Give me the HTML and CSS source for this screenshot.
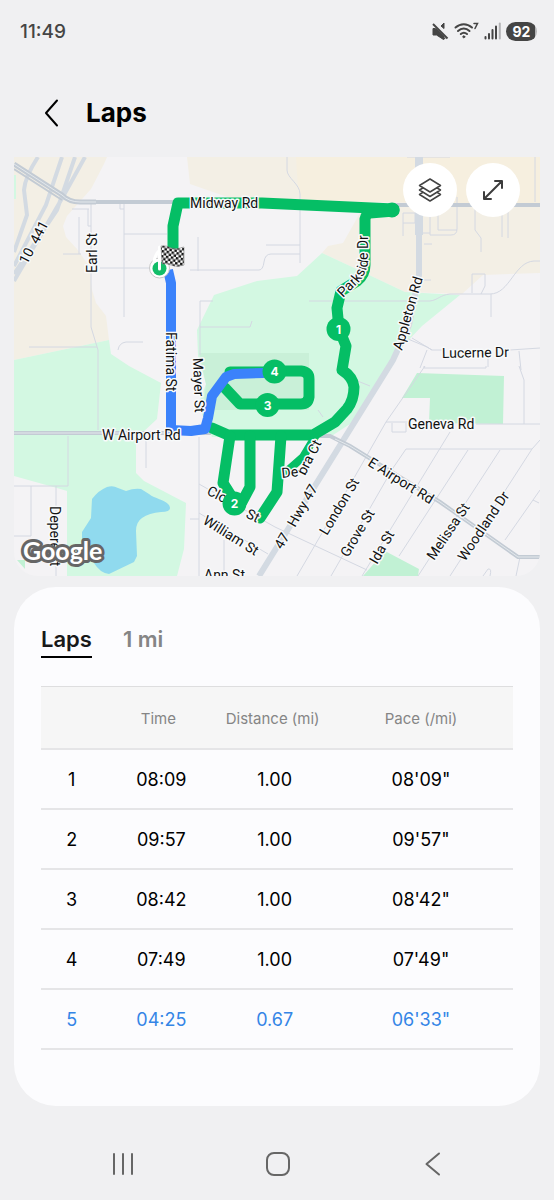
FILE: index.html
```html
<!DOCTYPE html>
<html lang="en">
<head>
<meta charset="utf-8">
<meta name="viewport" content="width=device-width, initial-scale=1">
<title>Laps</title>
<link rel="stylesheet" href="styles.css">
</head>
<body>
<div class="screen">
  <div class="status">
    <span class="clock">11:49</span>
    <div class="status-icons">
      <svg viewBox="0 0 17 18" width="17" height="18"><path d="M1 6.500h3.500l2 1 7.500 8-2.500 2-7-4.500H1zM9 4l3-3v5.500z" fill="#454545" stroke="#454545" stroke-linejoin="round"/><path d="M1.500 1.500L16 16" stroke="#f0f0f2" stroke-width="4"/><path d="M1 2L15.500 16.500" stroke="#454545" stroke-width="2"/><path d="M1 6.500h3.500L12 14v3.500L5.500 13H1z" fill="#454545"/></svg>
      <svg viewBox="0 0 25 18" width="25" height="18" fill="none" stroke="#454545" stroke-width="2" stroke-linecap="round"><path d="M1.500 5.500C6.500 1 13 1 18 5.500M4 9c3.500-3.200 8-3.200 11.500 0M6.800 12c2-1.700 4.200-1.700 6.200 0"/><circle cx="9.800" cy="14.800" r="1" fill="#454545" stroke-width="1"/><path d="M20 1.500h3.500L21 6.500" stroke-width="1.500"/></svg>
      <svg viewBox="0 0 17 18" width="17" height="18" stroke="#454545" stroke-width="2" stroke-linecap="round"><path d="M1.500 15V16.500M5 12V16.500M8.500 8V16.500M12 4.500V16.500"/><path d="M15.800 1.500V16.500" stroke="#b4b4b6"/></svg>
      <span class="battery">92</span>
    </div>
  </div>

  <header class="header">
    <button class="back" aria-label="Back"><svg viewBox="0 0 16 28" width="16" height="28" fill="none" stroke="#000" stroke-width="2" stroke-linecap="round" stroke-linejoin="round"><path d="M13 1.500L2 14 13 26.500"/></svg></button>
    <h1>Laps</h1>
  </header>

  <main>
    <section class="map" aria-label="Route map">
      <svg class="map-canvas" viewBox="14 157 526 419">
        <rect x="14" y="157" width="526" height="419" fill="#f4f3f5"/>
        <path fill="#f3efe5" d="M14 157H107L104 164 91 189 67 216 63 226 66 237 77 249 89 266 92 290 96 303 106 316 109 340 14 360z"/>
        <path fill="#f3efe5" d="M187 157H300V201L233 199 190 184z"/>
        <path fill="#f6efdf" d="M296 157H540V205L302 201 298 189z"/>
        <path fill="#f3efe5" d="M365 204H540V273L483 275 462 294 405 292 350 266 322 253 328 246 343 243z"/>
        <path fill="#d3f8e2" d="M14 360L109 340 111 354 129 366 161 383 157 419 142 433 136 443V473L144 481 186 503 184 549 177 576H67V491L57 488 14 476zM14 175h2v24h-2z"/>
        <path fill="#d3f8e2" d="M214 295L257 281 297 276 322 253 350 266 405 292 460 295 422 326 403 346 350 424 330 437H212L198 405 206 384 198 356 197 330z"/>
        <path fill="#c9f0d8" d="M199 353H309V410H203L206 384z"/>
        <path fill="#c1f1d4" d="M417 373L504 376 503 424 429 423 430 398H402zM385 551L419 569 418 576H363zM17 560h8v9z"/>
        <path fill="#90daee" d="M92 499Q99 490 107 487Q113 485 118 488L126 491Q134 488 141 489L149 494C155 499 164 499 169 505Q173 512 161 512Q149 513 142 518Q136 522 136 531L137 556 134 562 109 574Q100 573 94 563L82 539V532L91 518z"/>

        <g class="minor">
          <path d="M91 202V327L98 350 98 430M72 209H89M88 209V226H91M79 217V254M63 254H81M124 202V317M120 203V209H124M124 234H167M100 268H155M29 347H97M118 350Q119 343 126 342H143M198 237V271M190 270H259Q263 270 264 262Q265 254 271 254H300M266 245H300M300 263V194C300 184 287 178 287 170V157M200 355V301H213M200 327H250L252 321M309 301H430C438 300 440 295 450 294H490C510 294 514 262 534 261H540"/>
          <path d="M68 436V486H14M31 486V536H14M56 486V576M146 440V468M199 437V576M190 519H199M224 540V576M199 484L275 527 367 570M199 513L268 554"/>
          <path d="M403 213V236M403 213H415V223H403M430 235V200M430 235H451Q457 235 457 229V197M422 233H430M424 244H432M438 197V230H457M475 197V230L481 238V252M502 197V237M508 197V238M472 293V274H485V286L481 294M491 294V317M407 157H450M535 157V202M424 280H431"/>
          <path d="M408 339L427 347 432 350H442M412 338L432 350M427 350L420 368M488 349V367M510 350L540 348M519 351L521 370M424 366V368H486V366M519 366L524 380 524 424M386 422L425 366M386 422H408M476 424H540M392 423V432H406V423M297 576L350 485 386 422M331 576L393 468 406 449H532L540 440M362 576L450 432M399 556L468 450M418 576L500 450M450 576L532 449M505 540L540 490M533 500L539 503M520 557L516 576M483 576L488 569Q492 568 490 576M355 380L370 386M318 410L323 417"/>
        </g>
        <g class="roads">
          <path class="freeway" d="M14 252L27 215 24 190Q25 177 38 157M14 266L46 205 62 157M14 274L57 210 75 157M14 281L64 195 85 157" stroke-width="4"/>
          <path d="M14 164L62 195Q69 202 80 202H96" stroke-width="5"/><path d="M14 169L62 200" stroke-width="2"/>
          <path d="M90 202H176M14 433H170M390 205H540" stroke-width="4"/>
          <path class="highway" d="M419 157V275L409 325 393 360 259 576" stroke-width="6"/><path class="highway" d="M419 157V235" stroke-width="8"/>
          <path d="M313 436H330L350 446 440 502 518 557H540" stroke-width="4"/><path d="M199 434H211" stroke-width="2"/>
        </g>
        <path d="M14 164L62 195Q69 202 80 202H96M14 433H170M335 439L350 446 440 502 518 557H540" fill="none" stroke="#e3e8ec" stroke-width="1"/>

        <g class="route">
          <path d="M173 252V226L178 203H262L394 209"/>
          <path d="M394 211L370 213Q366 214 365 219V265Q365 275 357 281L341 291 337 308 339 329 346 346 342 370Q353 377 354 387Q354 400 347 409L335 422 313 435H228L212 428"/>
          <path d="M230 436L223 483 235 502M250 436V487L242 502M281 436L277 492 260 518"/>
          <path d="M315 437L303 457 286 472" stroke-width="8"/>
          <path d="M275 371H301Q309 372 309 379V397Q308 404 301 404H240L225 388M230 372H275"/>
          <circle cx="392" cy="210" r="2"/>
        </g>
        <path class="current" d="M264 373L234 374 226 377 212 396 208 418 205 429 191 431 171 430V283L168 270"/>

        <g class="pins">
          <circle cx="338.500" cy="329" r="12"/><circle cx="267.500" cy="405" r="12"/><circle cx="274.500" cy="371.500" r="12"/>
        </g>
        <g class="pin-text"><text x="338.500" y="334">1</text><text x="267.500" y="410">3</text><text x="274.500" y="376">4</text></g>

        <circle cx="159.500" cy="268" r="10" fill="#fff" stroke="#c8c8c8" stroke-width="1"/>
        <path d="M154 262Q155 254 160 250" fill="none" stroke="#fff" stroke-width="3"/>
        <circle cx="159.500" cy="268.500" r="7" fill="#12bd68"/>
        <path d="M159.500 247V269" stroke="#fff" stroke-width="3" stroke-linecap="round"/>
        <defs><pattern id="checks" width="5" height="5" patternUnits="userSpaceOnUse" patternTransform="rotate(8)"><path fill="#fff" d="M0 0h5v5H0z"/><path fill="#111" d="M0 0h2.500v2.500H0zM2.500 2.500H5V5H2.500z"/></pattern>
          <path id="parkside" d="M343 298L353 288Q366 277 368 262V228"/>
        </defs>
        <path d="M161 246Q166 245 171 248Q177 250 184 247V265Q177 268 171 265Q165 263 162 264z" fill="url(#checks)" stroke="#777" stroke-width=".5"/>

        <g class="labels">
          <text x="190" y="208">Midway Rd</text>
          <text transform="translate(97 273) rotate(-90)">Earl St</text>
          <text transform="translate(27 265) rotate(-62)">10&#160; 441</text>
          <text transform="translate(166 332) rotate(90)">Fatima St</text>
          <text transform="translate(193 358) rotate(88)">Mayer St</text>
          <text x="102" y="440">W Airport Rd</text>
          <text><textPath href="#parkside">Parkside Dr</textPath></text>
          <text transform="translate(402 351) rotate(-74)">Appleton Rd</text>
          <text transform="translate(442 358) rotate(-1)">Lucerne Dr</text>
          <text x="408" y="429">Geneva Rd</text>
          <text transform="translate(367 465) rotate(32)">E Airport Rd</text>
          <text transform="translate(305 476) rotate(-63)">bra Ct</text>
          <text transform="translate(282 478) rotate(-6)">De</text>
          <text transform="translate(206 494) rotate(27)">Clo</text>
          <text transform="translate(245 517) rotate(27)">St</text>
          <text transform="translate(202 523) rotate(32)">William St</text>
          <text transform="translate(282 550) rotate(-60)">47</text>
          <text transform="translate(295 528) rotate(-60)">Hwy 47</text>
          <text transform="translate(327 536) rotate(-59)">London St</text>
          <text transform="translate(348 558) rotate(-59)">Grove St</text>
          <text transform="translate(377 565) rotate(-60)">Ida St</text>
          <text transform="translate(434 561) rotate(-56)">Melissa St</text>
          <text transform="translate(465 562) rotate(-56)">Woodland Dr</text>
          <text transform="translate(50 506) rotate(90)">Depere St</text>
          <text x="204" y="580">Ann St</text>
        </g>
        <text class="brand" x="23" y="560">Google</text>
        <circle class="pins" cx="234.500" cy="503.500" r="12"/><text class="pin-text" x="234.500" y="508">2</text>
      </svg>
      <div class="map-tools">
        <button aria-label="Map layers"><svg viewBox="0 0 26 26" width="26" height="26" fill="none" stroke="#444" stroke-width="1.500" stroke-linejoin="round" stroke-linecap="round"><path d="M13 2L23.500 8.500 13 15 2.500 8.500zM5 11.500L2.500 13 13 19.500 23.500 13 21 11.500M5 16L2.500 17.500 13 24l10.500-6.500L21 16"/></svg></button>
        <button aria-label="Expand map"><svg viewBox="0 0 24 24" width="24" height="24" fill="none" stroke="#3c3c3c" stroke-width="2" stroke-linecap="round" stroke-linejoin="round"><path d="M3 21L21 3M14 3h7v7M3 14v7h7"/></svg></button>
      </div>
    </section>

    <section class="card">
      <div class="tabs" role="tablist">
        <button class="tab selected" role="tab" aria-selected="true">Laps</button>
        <button class="tab" role="tab" aria-selected="false">1 mi</button>
      </div>
      <table class="laps">
        <thead><tr><th class="num" aria-label="Lap"></th><th class="time">Time</th><th class="dist">Distance (mi)</th><th>Pace (/mi)</th></tr></thead>
        <tbody>
          <tr><td>1</td><td>08:09</td><td>1.00</td><td>08'09"</td></tr>
          <tr><td>2</td><td>09:57</td><td>1.00</td><td>09'57"</td></tr>
          <tr><td>3</td><td>08:42</td><td>1.00</td><td>08'42"</td></tr>
          <tr><td>4</td><td>07:49</td><td>1.00</td><td>07'49"</td></tr>
          <tr class="active"><td>5</td><td>04:25</td><td>0.67</td><td>06'33"</td></tr>
        </tbody>
      </table>
    </section>
  </main>

  <nav class="navbar" aria-label="System">
    <button aria-label="Recent apps"><svg viewBox="0 0 24 24" width="24" height="24" stroke="#666" stroke-width="2" stroke-linecap="round"><path d="M3 2V22M12 2V22M21 2V22"/></svg></button>
    <button aria-label="Home"><svg viewBox="0 0 26 26" width="26" height="26" fill="none" stroke="#666" stroke-width="2"><rect x="2" y="2" width="22" height="22" rx="7"/></svg></button>
    <button aria-label="Back"><svg viewBox="0 0 24 24" width="24" height="24" fill="none" stroke="#666" stroke-width="2" stroke-linecap="round" stroke-linejoin="round"><path d="M18 1.500L5.500 12 18 22.500"/></svg></button>
  </nav>
</div>
</body>
</html>
```
FILE: styles.css
```css
* { box-sizing: border-box; }
body { margin: 0; background: #f0f0f2; color: #000; font-family: Inter, Roboto, sans-serif; }
button { margin: 0; padding: 0; border: 0; background: none; color: inherit; font: inherit; cursor: pointer; }
svg { display: block; }
h1 { margin: 0; font-size: 26px; line-height: 36px; font-weight: 700; }

.screen { display: flex; flex-direction: column; min-height: 100vh; }
.status { display: flex; align-items: center; justify-content: space-between; height: 62px; padding: 0 17px 0 20px; }
.clock { color: #454545; font-size: 19px; font-weight: 500; }
.status-icons { display: flex; align-items: center; gap: 5px; }
.battery { width: 31px; border-radius: 10px; background: linear-gradient(to right, #454545 92%, #b4b4b6 92%); color: #fff; font-size: 14px; line-height: 19px; font-weight: 700; text-align: center; }

.header { display: flex; align-items: center; gap: 24px; height: 95px; padding: 6px 14px 0 42px; }
.back { display: flex; justify-content: center; width: 20px; }

main { display: flex; flex-direction: column; gap: 11px; padding: 0 14px; }
.map { position: relative; overflow: hidden; border-radius: 0 0 24px 24px; }
.map-canvas { width: 100%; height: auto; }
.map-tools { position: absolute; top: 6px; right: 20px; display: flex; gap: 9px; }
.map-tools button { display: flex; align-items: center; justify-content: center; width: 54px; height: 54px; border-radius: 50%; background: #fff; }

.minor path { fill: none; stroke: #d4d8e2; stroke-width: 1; }
.roads path { fill: none; stroke: #c3cbd4; }
.roads .freeway, .roads .highway { stroke: #d3dae2; }
.route { fill: none; stroke: #05be65; stroke-width: 11; stroke-linejoin: round; stroke-linecap: round; }
.current { fill: none; stroke: #3b82fb; stroke-width: 10; stroke-linejoin: round; }
.pins { fill: #05be65; }
.pin-text { fill: #fff; font-size: 12px; font-weight: 700; text-anchor: middle; }
.labels { fill: #111; stroke: #f8fafb; stroke-width: 3; stroke-linejoin: round; paint-order: stroke; font-family: Roboto, sans-serif; font-size: 14px; }
.brand { fill: #fff; stroke: #666; stroke-width: 6; stroke-linejoin: round; paint-order: stroke; font-family: Lato, sans-serif; font-size: 25px; font-weight: 700; }

.card { padding: 36px 27px 56px; border-radius: 42px; background: #fcfcfe; }
.tabs { display: flex; gap: 31px; margin-bottom: 28px; }
.tab { border-bottom: 2px solid transparent; color: #858585; font-size: 22px; line-height: 33px; font-weight: 600; }
.tab.selected { border-color: #000; color: #181818; }

.laps { width: 100%; border-collapse: collapse; table-layout: fixed; text-align: center; }
.laps th { height: 62px; padding: 2px 0 0; border-top: 1px solid #dededf; border-bottom: 2px solid #e5e5e7; background: #f6f6f6; color: #858585; font-size: 15px; font-weight: 400; }
.laps td { height: 60px; padding: 2px 0 0; border-bottom: 2px solid #e5e5e7; font-size: 18px; }
.laps .num { width: 13%; }
.laps .time { width: 25%; padding-right: 6px; }
.laps .dist { width: 23%; padding-right: 4px; }
.laps .active { color: #3485e6; }

.navbar { display: flex; padding: 40px 43px 16px 45px; }
.navbar button { display: flex; flex: 1; align-items: center; justify-content: center; height: 36px; }
```
